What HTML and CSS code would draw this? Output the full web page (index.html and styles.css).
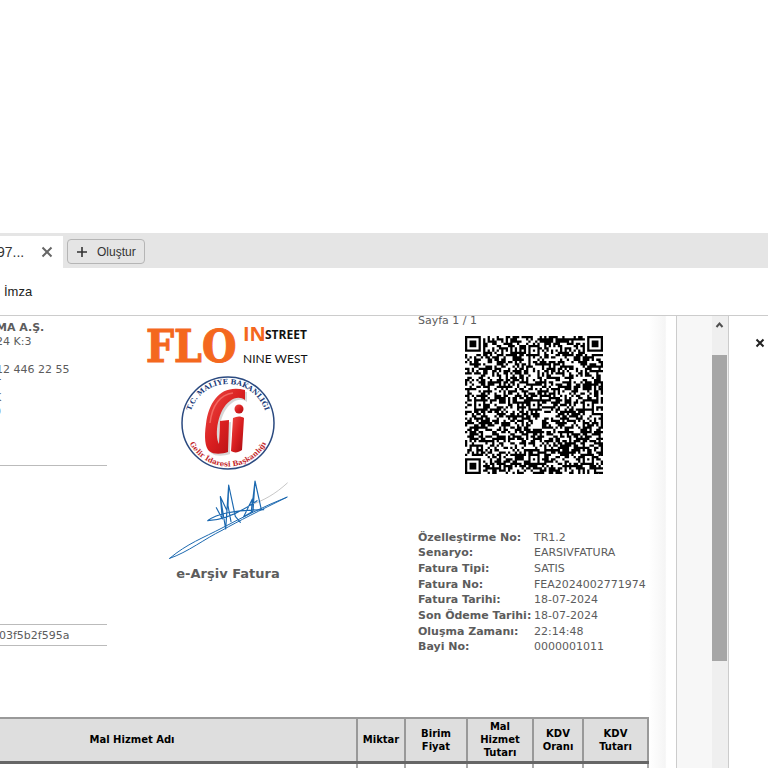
FILE: index.html
```html
<!DOCTYPE html>
<html lang="tr">
<head>
<meta charset="utf-8">
<title>e-Arşiv Fatura</title>
<link rel="stylesheet" href="styles.css">
</head>
<body>
<header class="tabbar">
  <div class="tab">
    <span class="tab-name">97...</span>
    <button class="icon-button" aria-label="Sekmeyi kapat"><svg width="12" height="12" viewBox="0 0 12 12"><path d="M1.500 1.500l9 9M10.500 1.500l-9 9" stroke="#666" stroke-width="2"/></svg></button>
  </div>
  <button class="create"><svg width="12" height="12" viewBox="0 0 12 12"><path d="M6 1v10M1 6h10" stroke="#333" stroke-width="1.600"/></svg>Oluştur</button>
</header>
<nav class="toolbar"><a href="#">İmza</a></nav>
<main class="workspace">
  <div class="viewer">
    <article class="invoice">
      <section class="seller">
        <div class="address">
          <strong>MA A.Ş.</strong>
          <span>24 K:3</span>
          <span>&nbsp;</span>
          <span>12 446 22 55</span>
          <span class="clipped">T</span>
          <span class="clipped">K</span>
          <span class="clipped">0</span>
        </div>
        <div class="ettn">03f5b2f595a</div>
      </section>
      <section class="brand">
        <svg class="logo" width="164" height="46" viewBox="0 0 164 46" role="img" aria-label="FLO">
          <text class="flo" x="0" y="41">FLO</text>
          <text class="in" x="97" y="20">IN</text>
          <text class="street" x="119" y="18">STREET</text>
          <text class="west" x="97" y="42">NINE WEST</text>
        </svg>
        <svg class="seal" width="96" height="96" viewBox="0 0 96 96">
          <defs>
            <linearGradient id="red" x1="0" x2="1" y1="0" y2="1"><stop offset="0" stop-color="#ee4b45"/><stop offset=".5" stop-color="#d91f20"/><stop offset="1" stop-color="#a90c12"/></linearGradient>
            <path id="upper" d="M9 48a39 39 0 0 1 78 0"/>
            <path id="lower" d="M4.500 48a43.500 43.500 0 0 0 87 0"/>
          </defs>
          <circle cx="48" cy="48" r="46" fill="#fff" stroke="#2b4a80" stroke-width="1.500"/>
          <text class="seal-top"><textPath href="#upper" startOffset="50%">T.C. MALİYE BAKANLIĞI</textPath></text>
          <text class="seal-bottom"><textPath href="#lower" startOffset="50%">Gelir İdaresi Başkanlığı</textPath></text>
          <path d="M65 15C42 9 29 25 26 49C24 62 25 72 29 76C34 80 42 79 48 77L49 45L40 46L39 69C34 60 38 34 50 26C55 22 61 22 65 25Z" fill="#777" opacity=".3" transform="translate(2 2)"/>
          <path d="M65 15C42 9 29 25 26 49C24 62 25 72 29 76C34 80 42 79 48 77L49 45L40 46L39 69C34 60 38 34 50 26C55 22 61 22 65 25Z" fill="url(#red)"/>
          <circle cx="59" cy="34" r="4.500" fill="url(#red)"/>
          <path d="M53 43C57 41 61 41 64 43L62 75C58 78 54 78 51 76Z" fill="url(#red)"/>
          <path d="M30 48C32 32 39 20 53 18" stroke="#ff8a80" stroke-width="1.500" fill="none" opacity=".6"/>
        </svg>
        <svg class="signature" width="122" height="82" viewBox="0 0 366 246" fill="none" stroke-linecap="round" stroke-linejoin="round">
          <path d="M245 80C290 65 325 45 361 12" stroke="#aaa" stroke-width="2"/>
          <path d="M8 238C60 194 110 176 165 147C225 116 290 82 361 54C275 96 215 126 165 154C115 178 62 220 8 238Z" stroke="#1c69b0" stroke-width="3"/>
          <path d="M270 65C220 100 170 124 122 125C150 104 197 94 290 92M148 86L166 120L160 53L176 150L185 18L205 112L220 130M160 53L180 95L176 150M185 18L183 80L192 128M230 113L256 60L253 100L264 6L283 92M230 113L258 97L264 6" stroke="#1c69b0" stroke-width="3.500"/>
        </svg>
        <h1>e-Arşiv Fatura</h1>
      </section>
      <section class="details">
        <p class="page-number">Sayfa 1 / 1</p>
        <svg id="qr" class="qr" viewBox="0 0 61 61" role="img" aria-label="Karekod"></svg>
        <dl>
          <dt>Özelleştirme No:</dt><dd>TR1.2</dd>
          <dt>Senaryo:</dt><dd>EARSIVFATURA</dd>
          <dt>Fatura Tipi:</dt><dd>SATIS</dd>
          <dt>Fatura No:</dt><dd>FEA2024002771974</dd>
          <dt>Fatura Tarihi:</dt><dd>18-07-2024</dd>
          <dt>Son Ödeme Tarihi:</dt><dd>18-07-2024</dd>
          <dt>Oluşma Zamanı:</dt><dd>22:14:48</dd>
          <dt>Bayi No:</dt><dd>0000001011</dd>
        </dl>
      </section>
      <table class="lines">
        <colgroup><col><col class="c-qty"><col class="c-price"><col class="c-total"><col class="c-rate"><col class="c-tax"></colgroup>
        <thead><tr><th>Mal Hizmet Adı</th><th>Miktar</th><th>Birim<br>Fiyat</th><th>Mal<br>Hizmet<br>Tutarı</th><th>KDV<br>Oranı</th><th>KDV<br>Tutarı</th></tr></thead>
        <tbody><tr><td></td><td></td><td></td><td></td><td></td><td></td></tr></tbody>
      </table>
    </article>
    <div class="page-edge"></div>
  </div>
  <div class="gutter"></div>
  <div class="scrollbar">
    <svg width="15" height="18" viewBox="0 0 15 18"><path d="M4.500 11L7.500 7.500L10.500 11" fill="none" stroke="#505050" stroke-width="2"/></svg>
    <div class="thumb"></div>
  </div>
  <aside class="side"><button class="icon-button" aria-label="Kapat"><svg width="10" height="10" viewBox="0 0 10 10"><path d="M1.500 1.500l7 7M8.500 1.500l-7 7" stroke="#222" stroke-width="2"/></svg></button></aside>
</main>
<script src="qr.js"></script>
</body>
</html>
```
FILE: styles.css
```css
* { box-sizing: border-box; }
body {
  margin: 0;
  height: 100vh;
  padding-top: 233px;
  display: flex;
  flex-direction: column;
  overflow: hidden;
  background: #fff;
  color: #5c5c5c;
  font: 11px/14px "DejaVu Sans", sans-serif;
}
button { border: 0; padding: 0; background: none; font: inherit; color: inherit; }
.icon-button { display: flex; }
.tabbar {
  flex: none;
  height: 35px;
  display: flex;
  gap: 4px;
  background: #e5e5e5;
  padding-top: 3px;
  font: 12px/16px "Liberation Sans", sans-serif;
  color: #333;
}
.tab {
  width: 63px;
  display: flex;
  align-items: center;
  justify-content: space-between;
  padding-right: 10px;
  background: #fff;
}
.tab-name { margin-left: -3px; font-size: 14px; }
.create {
  height: 25px;
  margin-top: 3px;
  padding: 0 8px;
  display: flex;
  align-items: center;
  gap: 9px;
  border: 1px solid #b5b5b5;
  border-radius: 4px;
}
.toolbar {
  flex: none;
  height: 48px;
  display: flex;
  align-items: center;
  padding-left: 4px;
  border-bottom: 1px solid #ccc;
  font: 13px/16px "Liberation Sans", sans-serif;
}
.toolbar a { color: #222; text-decoration: none; }
.workspace { flex: 1; min-height: 0; display: flex; }
.viewer { flex: 1; min-width: 0; display: flex; overflow: hidden; border-right: 1px solid #ccc; }
.invoice {
  flex: 1;
  min-width: 0;
  display: grid;
  grid-template-columns: 107px 1fr 231px;
  grid-template-rows: 401px auto;
}
.page-edge { flex: none; width: 27px; background: linear-gradient(to right, #fff, #fafafa 30%, #f5f5f5 60%, #fff 65%); }
.gutter { flex: none; width: 35px; background: #f7f7f7; }
.scrollbar { flex: none; width: 17px; display: flex; flex-direction: column; background: #efefef; border-right: 1px solid #ccc; }
.scrollbar svg { flex: none; }
.thumb { width: 15px; height: 306px; margin-top: 21px; background: #a6a6a6; }
.side { flex: none; width: 39px; padding: 22px 0 0 26px; }

.address { height: 150px; padding-top: 5px; border-bottom: 1px solid #bbb; }
.address > * { display: block; margin-left: -4px; white-space: nowrap; }
.address .clipped { margin-left: -6px; }
.ettn {
  margin-top: 158px;
  padding: 4px 0 2px;
  border-top: 1px solid #bbb;
  border-bottom: 1px solid #bbb;
  text-indent: -1px;
}
.brand { display: flex; flex-direction: column; align-items: center; padding: 5px 69px 0 0; }
.seal { margin-top: 8px; }
.signature { margin-top: 8px; }
.brand h1 { margin: 5px 0 0; font-size: 13px; line-height: 16px; }
.flo { font: bold 44px "DejaVu Serif Condensed", "DejaVu Serif", serif; fill: #f4681e; stroke: #f4681e; }
.in { font: bold 20px "Open Sans", sans-serif; fill: #f4681e; }
.street { font: bold 12px "Open Sans", sans-serif; fill: #111; }
.west { font: 12px Lato, sans-serif; fill: #111; }
.seal text { text-anchor: middle; }
.seal-top { font: bold 7px "DejaVu Serif", serif; fill: #203a78; }
.seal-bottom { font: bold 7px "DejaVu Serif", serif; fill: #c3272b; }

.page-number { margin: 0 0 11px; line-height: 9px; }
.qr { display: block; width: 138px; height: 138px; margin: 0 auto; }
.details dl {
  margin: 56px 0 0;
  height: 125px;
  display: grid;
  grid-template-columns: 116px 1fr;
  grid-template-rows: repeat(8, 1fr);
  align-items: center;
  white-space: nowrap;
}
.details dt { font-weight: bold; }
.details dd { margin: 0; }

.lines {
  grid-column: 1 / -1;
  width: calc(100% + 94px);
  margin-left: -94px;
  table-layout: fixed;
  border-collapse: collapse;
  color: #000;
  font-size: 10px;
  line-height: 13px;
}
.lines th { height: 44px; padding: 1px 0; background: #dedede; border: 2px solid #999; border-bottom: 3px solid #666; }
.lines td { height: 30px; border: 2px solid #aaa; }
.c-qty { width: 48px; }
.c-price { width: 62px; }
.c-total { width: 66px; }
.c-rate { width: 50px; }
.c-tax { width: 65px; }
```
FILE: qr.js
```js
const size = 61;
let seed = 20240718;
const random = () => {
  seed = (seed + 0x6d2b79f5) | 0;
  let t = Math.imul(seed ^ (seed >>> 15), 1 | seed);
  t = (t + Math.imul(t ^ (t >>> 7), 61 | t)) ^ t;
  return ((t ^ (t >>> 14)) >>> 0) / 4294967296;
};
const grid = Array.from({ length: size }, () => Array.from({ length: size }, () => random() > 0.47));

// Concentric squares: finder marks have a white margin, alignment marks do not.
function mark(cx, cy, radius, whiteRings) {
  for (let y = -radius; y <= radius; y++) {
    for (let x = -radius; x <= radius; x++) {
      const row = grid[cy + y];
      if (row && cx + x >= 0 && cx + x < size) {
        row[cx + x] = !whiteRings.includes(Math.max(Math.abs(x), Math.abs(y)));
      }
    }
  }
}
for (let i = 8; i < size - 8; i++) {
  grid[6][i] = grid[i][6] = i % 2 === 0;
}
[[30, 6], [6, 30], [30, 30], [54, 30], [30, 54], [54, 54]].forEach(([x, y]) => mark(x, y, 2, [1]));
[[3, 3], [57, 3], [3, 57]].forEach(([x, y]) => mark(x, y, 4, [2, 4]));

let d = "";
grid.forEach((row, y) => row.forEach((on, x) => { if (on) d += `M${x} ${y}h1v1h-1z`; }));
const path = document.createElementNS("http://www.w3.org/2000/svg", "path");
path.setAttribute("d", d);
document.getElementById("qr").append(path);
```
